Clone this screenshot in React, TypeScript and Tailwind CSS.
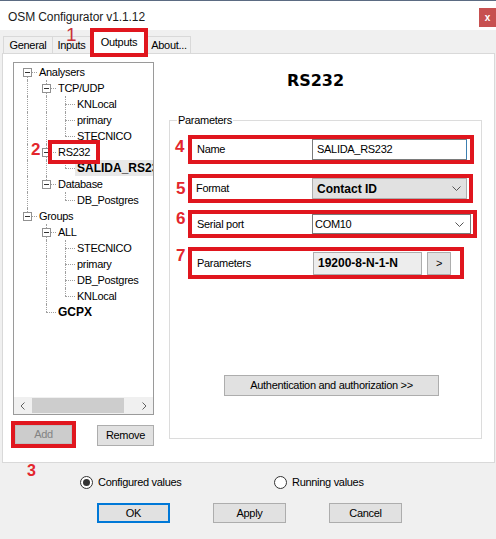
import React from "react";

type TreeNode = {
  label: string;
  depth: number;
  guides: boolean[];
  last: boolean;
  kids?: boolean;
  first?: boolean;
  bold?: boolean;
  sel?: boolean;
  mark?: boolean;
};

const tree: TreeNode[] = [
  { label: "Analysers", depth: 0, guides: [], last: false, kids: true, first: true },
  { label: "TCP/UDP", depth: 1, guides: [true], last: false, kids: true },
  { label: "KNLocal", depth: 2, guides: [true, true], last: false },
  { label: "primary", depth: 2, guides: [true, true], last: false },
  { label: "STECNICO", depth: 2, guides: [true, true], last: true },
  { label: "RS232", depth: 1, guides: [true], last: false, kids: true, mark: true },
  { label: "SALIDA_RS232", depth: 2, guides: [true, true], last: true, bold: true, sel: true },
  { label: "Database", depth: 1, guides: [true], last: true, kids: true },
  { label: "DB_Postgres", depth: 2, guides: [true, false], last: true },
  { label: "Groups", depth: 0, guides: [], last: true, kids: true },
  { label: "ALL", depth: 1, guides: [false], last: false, kids: true },
  { label: "STECNICO", depth: 2, guides: [false, true], last: false },
  { label: "primary", depth: 2, guides: [false, true], last: false },
  { label: "DB_Postgres", depth: 2, guides: [false, true], last: false },
  { label: "KNLocal", depth: 2, guides: [false, true], last: true },
  { label: "GCPX", depth: 1, guides: [false], last: true, bold: true },
];

function TreeRow({ n }: { n: TreeNode }) {
  return (
    <div className="relative flex h-[16px] items-center whitespace-nowrap">
      {n.guides.map((g, i) => (
        <span key={i} className="relative h-[16px] w-[19px] shrink-0">
          {g && (
            <span className="absolute left-[9px] top-0 h-[16px] border-l border-dotted border-[#a0a0a0]" />
          )}
        </span>
      ))}
      <span className="relative h-[16px] w-[19px] shrink-0">
        {!n.first && (
          <span className="absolute left-[9px] top-0 h-[8px] border-l border-dotted border-[#a0a0a0]" />
        )}
        {!n.last && (
          <span className="absolute left-[9px] top-[8px] h-[8px] border-l border-dotted border-[#a0a0a0]" />
        )}
        <span className="absolute left-[9px] top-[8px] w-[10px] border-t border-dotted border-[#a0a0a0]" />
        {n.kids && (
          <span className="absolute left-[5px] top-[4px] flex h-[9px] w-[9px] items-center justify-center border border-[#919191] bg-white">
            <span className="h-px w-[5px] bg-[#333]" />
          </span>
        )}
      </span>
      <span
        className={
          n.bold
            ? "px-[2px] text-[12px] font-bold leading-[16px] tracking-normal " + (n.sel ? "bg-[#e8e8e8]" : "")
            : "px-[2px] leading-[16px]"
        }
      >
        {n.label}
      </span>
      {/* annotation box */}
      {n.mark && (
        <span className="absolute left-[30px] top-[-4px] z-10 h-[24px] w-[52px] border-[4px] border-[#e0161e]" />
      )}
    </div>
  );
}

function Chevron() {
  return (
    <svg width="9" height="5" viewBox="0 0 9 5" fill="none">
      <polyline points="0.5,0.5 4.5,4.5 8.5,0.5" stroke="#555" strokeWidth="1" />
    </svg>
  );
}

function Radio({ checked, label }: { checked?: boolean; label: string }) {
  return (
    <div className="flex items-center">
      <span className="flex h-[13px] w-[13px] items-center justify-center rounded-full border border-[#333] bg-white">
        {checked && <span className="h-[7px] w-[7px] rounded-full bg-[#333]" />}
      </span>
      <span className="ml-[5px]">{label}</span>
    </div>
  );
}

export default function App() {
  return (
    <div className="relative h-[539px] w-[496px] overflow-hidden border-t border-[#5b6b82] bg-[#f0f0f0] font-['Liberation_Sans',Arial,sans-serif] text-[11px] tracking-[-0.3px] text-black">
      {/* title bar */}
      <div className="flex h-[29px] items-start justify-between bg-white pl-[8px]">
        <span className="mt-[7px] text-[12px] tracking-[-0.1px] text-[#1a1a1a]">OSM Configurator v1.1.12</span>
        <div className="mt-[7px] flex h-[19px] w-[17px] items-center justify-center bg-[#c75050] text-[10px] font-bold leading-none text-white">
          x
        </div>
      </div>

      {/* tabs */}
      <div className="relative z-10 flex h-[23px] items-end pl-[3px]">
        <div className="flex h-[17px] w-[50px] items-center justify-center border border-b-0 border-[#d9d9d9] bg-[#f0f0f0]">
          General
        </div>
        <div className="flex h-[17px] w-[38px] items-center justify-center border border-b-0 border-l-0 border-[#d9d9d9] bg-[#f0f0f0]">
          Inputs
        </div>
        <div className="relative z-10 mb-[-4px] ml-[-1px] flex h-[29px] w-[58px] items-center justify-center border-[4px] border-[#e0161e] bg-white">
          Outputs
        </div>
        <div className="flex h-[17px] w-[43px] items-center justify-center border border-b-0 border-l-0 border-[#d9d9d9] bg-[#f0f0f0]">
          About...
        </div>
        <span className="absolute left-[66px] top-[-5px] text-[19px] leading-none tracking-normal text-[#c9333a]">1</span>
      </div>

      {/* tab page */}
      <div className="ml-[2px] mr-[1px] flex h-[410px] border border-[#d9d9d9] bg-white">
        {/* left column */}
        <div className="flex flex-col pl-[10px] pt-[8px]">
          <div className="flex h-[353px] w-[141px] flex-col border border-[#9a9a9a] bg-white">
            <div className="flex-1 overflow-hidden pl-[4px] pt-[1px]">
              {tree.map((n, i) => (
                <TreeRow key={i} n={n} />
              ))}
            </div>
            <div className="flex h-[17px] items-center bg-[#f0f0f0]">
              <span className="flex h-[17px] w-[17px] items-center justify-center">
                <svg width="5" height="8" viewBox="0 0 5 8" fill="none">
                  <polyline points="4.5,0.5 1,4 4.5,7.5" stroke="#606060" strokeWidth="1" />
                </svg>
              </span>
              <span className="ml-px h-[15px] w-[92px] bg-[#cdcdcd]" />
              <span className="flex-1" />
              <span className="flex h-[17px] w-[17px] items-center justify-center">
                <svg width="5" height="8" viewBox="0 0 5 8" fill="none">
                  <polyline points="0.5,0.5 4,4 0.5,7.5" stroke="#606060" strokeWidth="1" />
                </svg>
              </span>
            </div>
          </div>
          <div className="mt-[6px] flex items-start">
            <div className="ml-[-2px] h-[27px] w-[65px] border-[4px] border-[#e0161e]">
              <div className="flex h-full w-full items-center justify-center border border-[#bfbfbf] bg-[#cccccc] text-[#838383]">
                Add
              </div>
            </div>
            <button className="ml-[21px] mt-[4px] flex h-[21px] w-[57px] items-center justify-center border border-[#adadad] bg-[#e1e1e1]">
              Remove
            </button>
          </div>
        </div>

        {/* right column */}
        <div className="ml-[15px] flex w-[313px] flex-col pt-[17px]">
          <div className="h-[20px] pr-[20px] text-center font-['DejaVu_Sans',Verdana,sans-serif] text-[16px] font-bold leading-[20px] tracking-normal">
            RS232
          </div>
          <div className="relative mt-[29px] flex h-[319px] flex-col border border-[#dcdcdc] pl-px">
            <span className="absolute left-[7px] top-[-8px] bg-white px-px leading-[14px]">Parameters</span>

            {/* Name */}
            <div className="mt-[14px] flex items-start">
              <span className="mt-[3px] w-[17px] pl-[4px] text-[17px] font-bold leading-none tracking-normal text-[#e3262d]">4</span>
              <div className="flex h-[29px] w-[286px] items-center border-[4px] border-[#e0161e]">
                <span className="w-[120px] pl-[5px]">Name</span>
                <div className="flex h-[21px] w-[155px] items-center border border-[#7a7a7a] border-r-[#3c7fb1] bg-white pl-[4px]">
                  SALIDA_RS232
                </div>
              </div>
            </div>

            {/* Format */}
            <div className="mt-[10px] flex items-start">
              <span className="mt-[6px] w-[17px] pl-[5px] text-[17px] font-bold leading-none tracking-normal text-[#e3262d]">5</span>
              <div className="flex h-[29px] w-[285px] items-center border-[4px] border-[#e0161e]">
                <span className="w-[120px] pl-[4px]">Format</span>
                <div className="flex h-[21px] w-[155px] items-center justify-between border border-[#adadad] bg-[#e1e1e1] pl-[4px] pr-[5px]">
                  <span className="text-[12px] font-bold tracking-normal">Contact ID</span>
                  <Chevron />
                </div>
              </div>
            </div>

            {/* Serial port */}
            <div className="mt-[7px] flex items-start">
              <span className="w-[17px] pl-[5px] text-[17px] font-bold leading-none tracking-normal text-[#e3262d]">6</span>
              <div className="flex h-[28px] w-[289px] items-center border-[4px] border-[#e0161e]">
                <span className="w-[120px] pl-[5px]">Serial port</span>
                <div className="flex h-[20px] w-[159px] items-center justify-between border border-[#7a7a7a] bg-white pl-[2px] pr-[6px]">
                  <span>COM10</span>
                  <Chevron />
                </div>
              </div>
            </div>

            {/* Parameters */}
            <div className="mt-[9px] flex items-start">
              <span className="w-[17px] pl-[5px] text-[17px] font-bold leading-none tracking-normal text-[#e3262d]">7</span>
              <div className="flex h-[32px] w-[276px] items-center border-[4px] border-[#e0161e]">
                <span className="w-[121px] pl-[5px]">Parameters</span>
                <div className="flex h-[23px] w-[109px] items-center border border-[#adadad] bg-[#ededed] pl-[4px] text-[12px] font-bold tracking-normal">
                  19200-8-N-1-N
                </div>
                <button className="ml-[5px] flex h-[23px] w-[24px] items-center justify-center border border-[#adadad] bg-[#e1e1e1]">
                  &gt;
                </button>
              </div>
            </div>

            <button className="ml-[53px] mt-[96px] flex h-[21px] w-[215px] items-center justify-center border border-[#adadad] bg-[#e1e1e1]">
              Authentication and authorization &gt;&gt;
            </button>
          </div>
        </div>
      </div>

      {/* bottom */}
      <div className="ml-[80px] mt-[11px] flex h-[16px] items-center">
        <div className="w-[194px]">
          <Radio checked label="Configured values" />
        </div>
        <Radio label="Running values" />
      </div>
      <div className="ml-[97px] mt-[13px] flex gap-[43px]">
        <button className="flex h-[20px] w-[73px] items-center justify-center border-2 border-[#0078d7] bg-[#e1e1e1]">
          OK
        </button>
        <button className="flex h-[20px] w-[73px] items-center justify-center border border-[#adadad] bg-[#e1e1e1]">
          Apply
        </button>
        <button className="flex h-[20px] w-[73px] items-center justify-center border border-[#adadad] bg-[#e1e1e1]">
          Cancel
        </button>
      </div>

      {/* annotations */}
      <span className="absolute left-[31px] top-[140px] z-20 text-[17px] font-bold leading-none tracking-normal text-[#e3262d]">2</span>
      <span className="absolute left-[27px] top-[462px] z-20 text-[16px] font-bold leading-none tracking-normal text-[#e3262d]">3</span>
    </div>
  );
}
